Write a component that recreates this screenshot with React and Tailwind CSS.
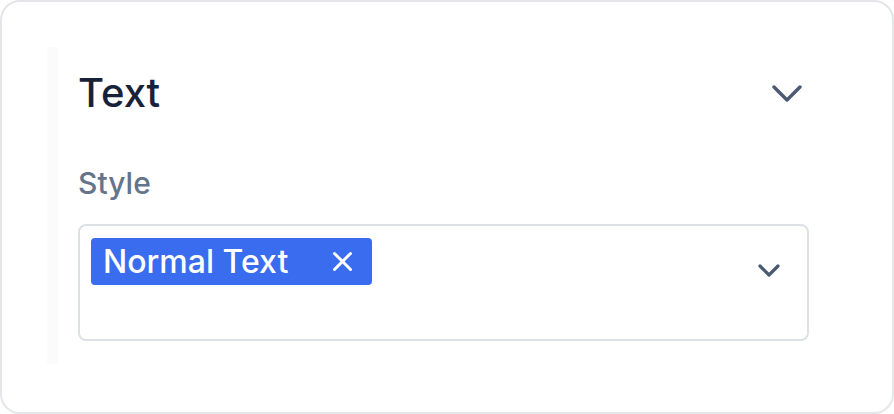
import React from 'react';

const ChevronDown = ({ className, w, h, stroke }) => (
  <svg width={w} height={h} viewBox={`0 0 ${w} ${h}`} fill="none" className={className}>
    <polyline
      points={`2,2 ${w / 2},${h - 2} ${w - 2},2`}
      stroke="currentColor"
      strokeWidth={stroke}
      strokeLinecap="round"
      strokeLinejoin="round"
    />
  </svg>
);

const CloseIcon = () => (
  <svg width="21" height="21" viewBox="0 0 21 21" fill="none">
    <path d="M2.5 2.5 18.5 18.5M18.5 2.5 2.5 18.5" stroke="white" strokeWidth="3" strokeLinecap="round" />
  </svg>
);

export default function App() {
  return (
    <div className="w-[894px] h-[414px] bg-white font-['Inter',sans-serif]">
      <div className="h-full border-2 border-[#e4e6ea] rounded-[20px] pt-[45px] px-[45px]">
        <div className="h-[317px] border-l-[11px] border-[#fbfbfb] pl-[20px] pr-[38px] pt-[26px]">
          <div className="flex items-center justify-between h-10">
            <h2 className="text-[40px] leading-[40px] text-[#18213a] font-medium">Text</h2>
            <ChevronDown w={30} h={17} stroke={3.4} className="text-[#4b5a72] mr-[7px]" />
          </div>

          <div className="mt-[56px] text-[30px] leading-[29px] text-[#64748b] font-medium">Style</div>

          <div className="mt-[26px] h-[117px] border-2 border-[#dde0e5] rounded-[8px] flex items-start justify-between pt-[12px] pl-[11px] pr-[27px]">
            <div className="w-[281px] h-[47px] bg-[#3a6cf0] rounded-[4px] flex items-center pl-[12px] pr-[19px]">
              <span className="text-[32px] leading-none text-white font-medium">Normal Text</span>
              <span className="ml-auto flex">
                <CloseIcon />
              </span>
            </div>
            <ChevronDown w={22} h={13} stroke={3.2} className="text-[#4b5a72] mt-[26px]" />
          </div>
        </div>
      </div>
    </div>
  );
}
